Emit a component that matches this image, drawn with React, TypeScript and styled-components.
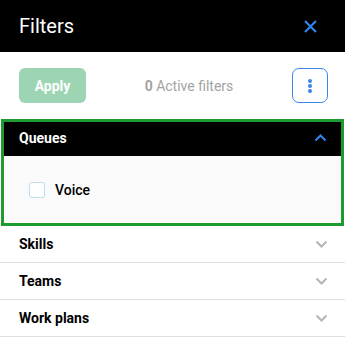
import React from "react";
import styled, { createGlobalStyle } from "styled-components";

const Global = createGlobalStyle`
  html, body { margin: 0; padding: 0; background: #ffffff; }
  body { font-family: Roboto, "Liberation Sans", Arial, sans-serif; }
  * { box-sizing: border-box; }
`;

const Panel = styled.div`
  width: 345px;
  background: #fff;
`;

const Header = styled.div`
  height: 52px;
  background: #000;
  display: flex;
  align-items: center;
  justify-content: space-between;
  padding: 0 26px 0 19px;
`;

const Title = styled.h1`
  margin: 0;
  color: #fff;
  font-size: 20px;
  font-weight: 400;
  letter-spacing: 0;
`;

const IconButton = styled.button`
  background: none;
  border: 0;
  padding: 0;
  width: 17px;
  height: 17px;
  display: flex;
  align-items: center;
  justify-content: center;
  cursor: pointer;
`;

const Toolbar = styled.div`
  margin-top: 16px;
  height: 35px;
  display: flex;
  align-items: center;
  justify-content: space-between;
  padding: 0 17px 0 19px;
`;

const ApplyButton = styled.button`
  width: 67px;
  height: 35px;
  border: 0;
  border-radius: 6px;
  background: #9dd4b4;
  color: #fff;
  font-family: inherit;
  font-size: 14px;
  font-weight: 700;
`;

const Count = styled.span`
  color: #a3a3a3;
  font-size: 14px;
  b { font-weight: 700; }
`;

const MoreButton = styled.button`
  width: 36px;
  height: 35px;
  border: 1px solid #3a86e8;
  border-radius: 7px;
  background: #fff;
  display: flex;
  align-items: center;
  justify-content: center;
  padding: 0;
`;

const Frame = styled.section`
  margin: 16px 1px 0;
  border: 3px solid #1e9b30;
`;

const OpenHead = styled.div`
  height: 34px;
  background: #000;
  display: flex;
  align-items: center;
  justify-content: space-between;
  padding: 0 14px 2px 15px;
  color: #fff;
  font-size: 14px;
  font-weight: 700;
`;

const OpenBody = styled.div`
  height: 67px;
  background: #fafafa;
  display: flex;
  align-items: center;
  padding-left: 25px;
`;

const Check = styled.span`
  width: 16px;
  height: 16px;
  border: 1px solid #bfdcf0;
  border-radius: 3px;
  background: #fff;
  margin-right: 10px;
`;

const Label = styled.span`
  font-size: 14px;
  font-weight: 500;
  color: #000;
`;

const Row = styled.div`
  height: 37px;
  border-bottom: 1px solid #e0e0e0;
  display: flex;
  align-items: center;
  justify-content: space-between;
  padding: 0 17px 0 19px;
  font-size: 14px;
  font-weight: 700;
  color: #000;
`;

const Chevron = ({ up, color }: { up?: boolean; color: string }) => (
  <svg width="13" height="8" viewBox="0 0 13 8">
    <path
      d={up ? "M1.5 6.5 L6.5 1.5 L11.5 6.5" : "M1.5 1.5 L6.5 6.5 L11.5 1.5"}
      fill="none"
      stroke={color}
      strokeWidth="2"
    />
  </svg>
);

export default function App() {
  return (
    <>
      <Global />
      <Panel>
        <Header>
          <Title>Filters</Title>
          <IconButton aria-label="close">
            <svg width="13" height="13" viewBox="0 0 13 13">
              <path d="M1 1 L12 12 M12 1 L1 12" stroke="#2f84ee" strokeWidth="2.2" />
            </svg>
          </IconButton>
        </Header>
        <Toolbar>
          <ApplyButton>Apply</ApplyButton>
          <Count>
            <b>0</b> Active filters
          </Count>
          <MoreButton aria-label="more">
            <svg width="6" height="16" viewBox="0 0 6 16">
              <circle cx="3" cy="3" r="2" fill="#3a86e8" />
              <circle cx="3" cy="8" r="2" fill="#3a86e8" />
              <circle cx="3" cy="13" r="2" fill="#3a86e8" />
            </svg>
          </MoreButton>
        </Toolbar>
        <Frame>
          <OpenHead>
            Queues
            <Chevron up color="#2f84ee" />
          </OpenHead>
          <OpenBody>
            <Check />
            <Label>Voice</Label>
          </OpenBody>
        </Frame>
        {["Skills", "Teams", "Work plans"].map((t) => (
          <Row key={t}>
            {t}
            <Chevron color="#b5b5b5" />
          </Row>
        ))}
      </Panel>
    </>
  );
}
